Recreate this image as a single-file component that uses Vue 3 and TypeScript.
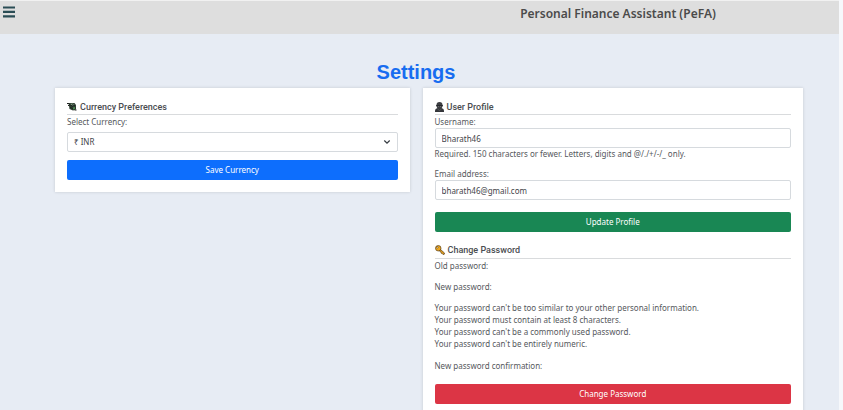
<script setup lang="ts">
import { ref } from 'vue'

const currency = ref('INR')
const username = ref('Bharath46')
const email = ref('bharath46@gmail.com')

const currencies = [
  { code: 'INR', label: '₹ INR' },
  { code: 'USD', label: '$ USD' },
  { code: 'EUR', label: '€ EUR' },
]

const passwordRules = [
  "Your password can't be too similar to your other personal information.",
  'Your password must contain at least 8 characters.',
  "Your password can't be a commonly used password.",
  "Your password can't be entirely numeric.",
]
</script>

<template>
  <div class="page">
    <header class="topbar">
      <button class="menu" type="button" aria-label="Menu">
        <svg viewBox="0 0 12 12" width="12" height="12">
          <path d="M0 1.5h12M0 5.9h12M0 10.3h12" stroke="#2a4d55" stroke-width="2.2" />
        </svg>
      </button>
      <div class="brand">Personal Finance Assistant (PeFA)</div>
    </header>

    <main class="content">
      <h1>Settings</h1>
      <div class="columns">
        <section class="card">
          <h2>
            <svg class="icon" viewBox="0 0 20 18" width="10" height="9">
              <path d="M3 2h12l3 4v9l-6 2-7-3z" fill="#2f3f33" />
              <path d="M6 4l5-1 4 2-4 2z" fill="#8faa90" />
              <path d="M5 5l7 4M10 4l6 4M6 10l6 4 5-2" stroke="#111c18" stroke-width="1.4" fill="none" />
              <path d="M12 11l4-1v4l-4 1z" fill="#4b8951" />
              <path d="M0 3h4M2 7h3M15 16h4" stroke="#222" stroke-width="2" />
            </svg>
            Currency Preferences
          </h2>
          <form @submit.prevent>
            <label for="currency">Select Currency:</label>
            <div class="select-wrap">
              <select id="currency" v-model="currency" class="control">
                <option v-for="c in currencies" :key="c.code" :value="c.code">{{ c.label }}</option>
              </select>
              <svg class="chevron" viewBox="0 0 8 6" width="8" height="6">
                <path d="M1.3 1.5L4 4.2l2.7-2.7" fill="none" stroke="#343a40" stroke-width="1.2" />
              </svg>
            </div>
            <button class="btn primary" type="submit">Save Currency</button>
          </form>
        </section>

        <section class="card">
          <h2>
            <svg class="icon" viewBox="0 0 18 20" width="9" height="10">
              <path d="M0 20v-3q0-4 5-5h8q5 1 5 5v3z" fill="#34363a" />
              <path d="M3 6q0-6 6-6t6 6v3q-1 5-6 5t-6-5z" fill="#3d3e42" />
              <path d="M2 7h14" stroke="#222428" stroke-width="1.6" />
              <path d="M6 9h2M10 9h2" stroke="#8c8d91" stroke-width="1" />
              <path d="M5 14l4 3 4-3" stroke="#77797d" fill="none" />
            </svg>
            User Profile
          </h2>
          <form @submit.prevent>
            <label for="username">Username:</label>
            <input id="username" v-model="username" class="control" type="text" />
            <p class="help">Required. 150 characters or fewer. Letters, digits and @/./+/-/_ only.</p>
            <label for="email">Email address:</label>
            <input id="email" v-model="email" class="control" type="email" />
            <button class="btn success" type="submit">Update Profile</button>
          </form>

          <h2 class="second">
            <svg class="icon" viewBox="0 0 20 20" width="10" height="10">
              <path d="M10 8l9 8-.5 2.5-2.5.5-1.5-2-2-.5-.5-2-4-3.5" fill="#e09c1c" stroke="#4b3513" stroke-width="1.3" />
              <circle cx="6.5" cy="6.5" r="5.5" fill="#eda721" stroke="#4b3513" stroke-width="1.3" />
              <circle cx="4.8" cy="4.8" r="1.5" fill="#fff" stroke="#4b3513" />
            </svg>
            Change Password
          </h2>
          <form @submit.prevent>
            <p class="field">Old password:</p>
            <p class="field">New password:</p>
            <ul class="rules">
              <li v-for="rule in passwordRules" :key="rule">{{ rule }}</li>
            </ul>
            <p>New password confirmation:</p>
            <button class="btn danger" type="submit">Change Password</button>
          </form>
        </section>
      </div>
    </main>
  </div>
</template>

<style>
html {
  background: #f6f8fb;
  scrollbar-width: none;
}
</style>

<style scoped>
.page {
  min-height: 100vh;
  margin-right: 4px;
  background: #e7ecf4;
  color: #55585c;
  font-family: "Noto Sans", "Open Sans", sans-serif;
  font-size: 8px;
  line-height: 12px;
}
.topbar {
  display: grid;
  grid-template-columns: 397fr 442fr;
  align-items: start;
  height: 34px;
  box-sizing: border-box;
  padding-top: 5px;
  border-top: 1px solid #f1f1f1;
  background: #dedede;
}
.menu {
  justify-self: start;
  display: flex;
  margin-left: 3px;
  padding: 0;
  border: 0;
  background: none;
}
.brand {
  text-align: center;
  font-size: 12px;
  line-height: 16px;
  font-weight: 600;
  color: #4b4b4b;
}
h1 {
  margin: 0;
  padding: 26px 7px 4px 0;
  text-align: center;
  font: bold 20px/24px "Liberation Sans", Arial, sans-serif;
  color: #176cf0;
}
.columns {
  display: grid;
  grid-template-columns: 355fr 381fr;
  align-items: start;
  gap: 13px;
  padding: 0 36px 0 55px;
}
.card {
  padding: 11px 12px 12px;
  background: #fff;
  box-shadow: 0 0 3px rgba(0, 0, 0, 0.15);
}
h2 {
  display: flex;
  align-items: center;
  gap: 3px;
  margin: 0 0 1px;
  height: 15px;
  border-bottom: 1px solid #d9dbdd;
  font: 500 9px/14px Roboto, sans-serif;
  color: #4a4d51;
}
.second {
  margin-top: 9px;
  height: 17px;
}
.icon {
  flex: none;
}
form {
  display: flex;
  flex-direction: column;
}
p,
.rules {
  margin: 0;
  padding: 0;
  list-style: none;
}
.field {
  margin-bottom: 9px;
}
.help {
  margin-bottom: 8px;
}
.rules {
  margin-bottom: 10px;
}
.control {
  width: 100%;
  height: 20px;
  box-sizing: border-box;
  margin: 0;
  padding: 0 6px;
  border: 1px solid #d6dade;
  border-radius: 2px;
  background: #fff;
  color: #3f4449;
  font: inherit;
  appearance: none;
}
.select-wrap {
  position: relative;
  display: flex;
  margin-top: 4px;
}
.chevron {
  position: absolute;
  right: 7px;
  top: 7px;
  pointer-events: none;
}
.btn {
  height: 20px;
  margin-top: 12px;
  padding: 0;
  border: 0;
  border-radius: 2px;
  color: #fff;
  font: inherit;
}
.primary {
  margin-top: 8px;
  background: #0d6efd;
}
.success {
  background: #198754;
}
.danger {
  background: #dc3545;
}
</style>
